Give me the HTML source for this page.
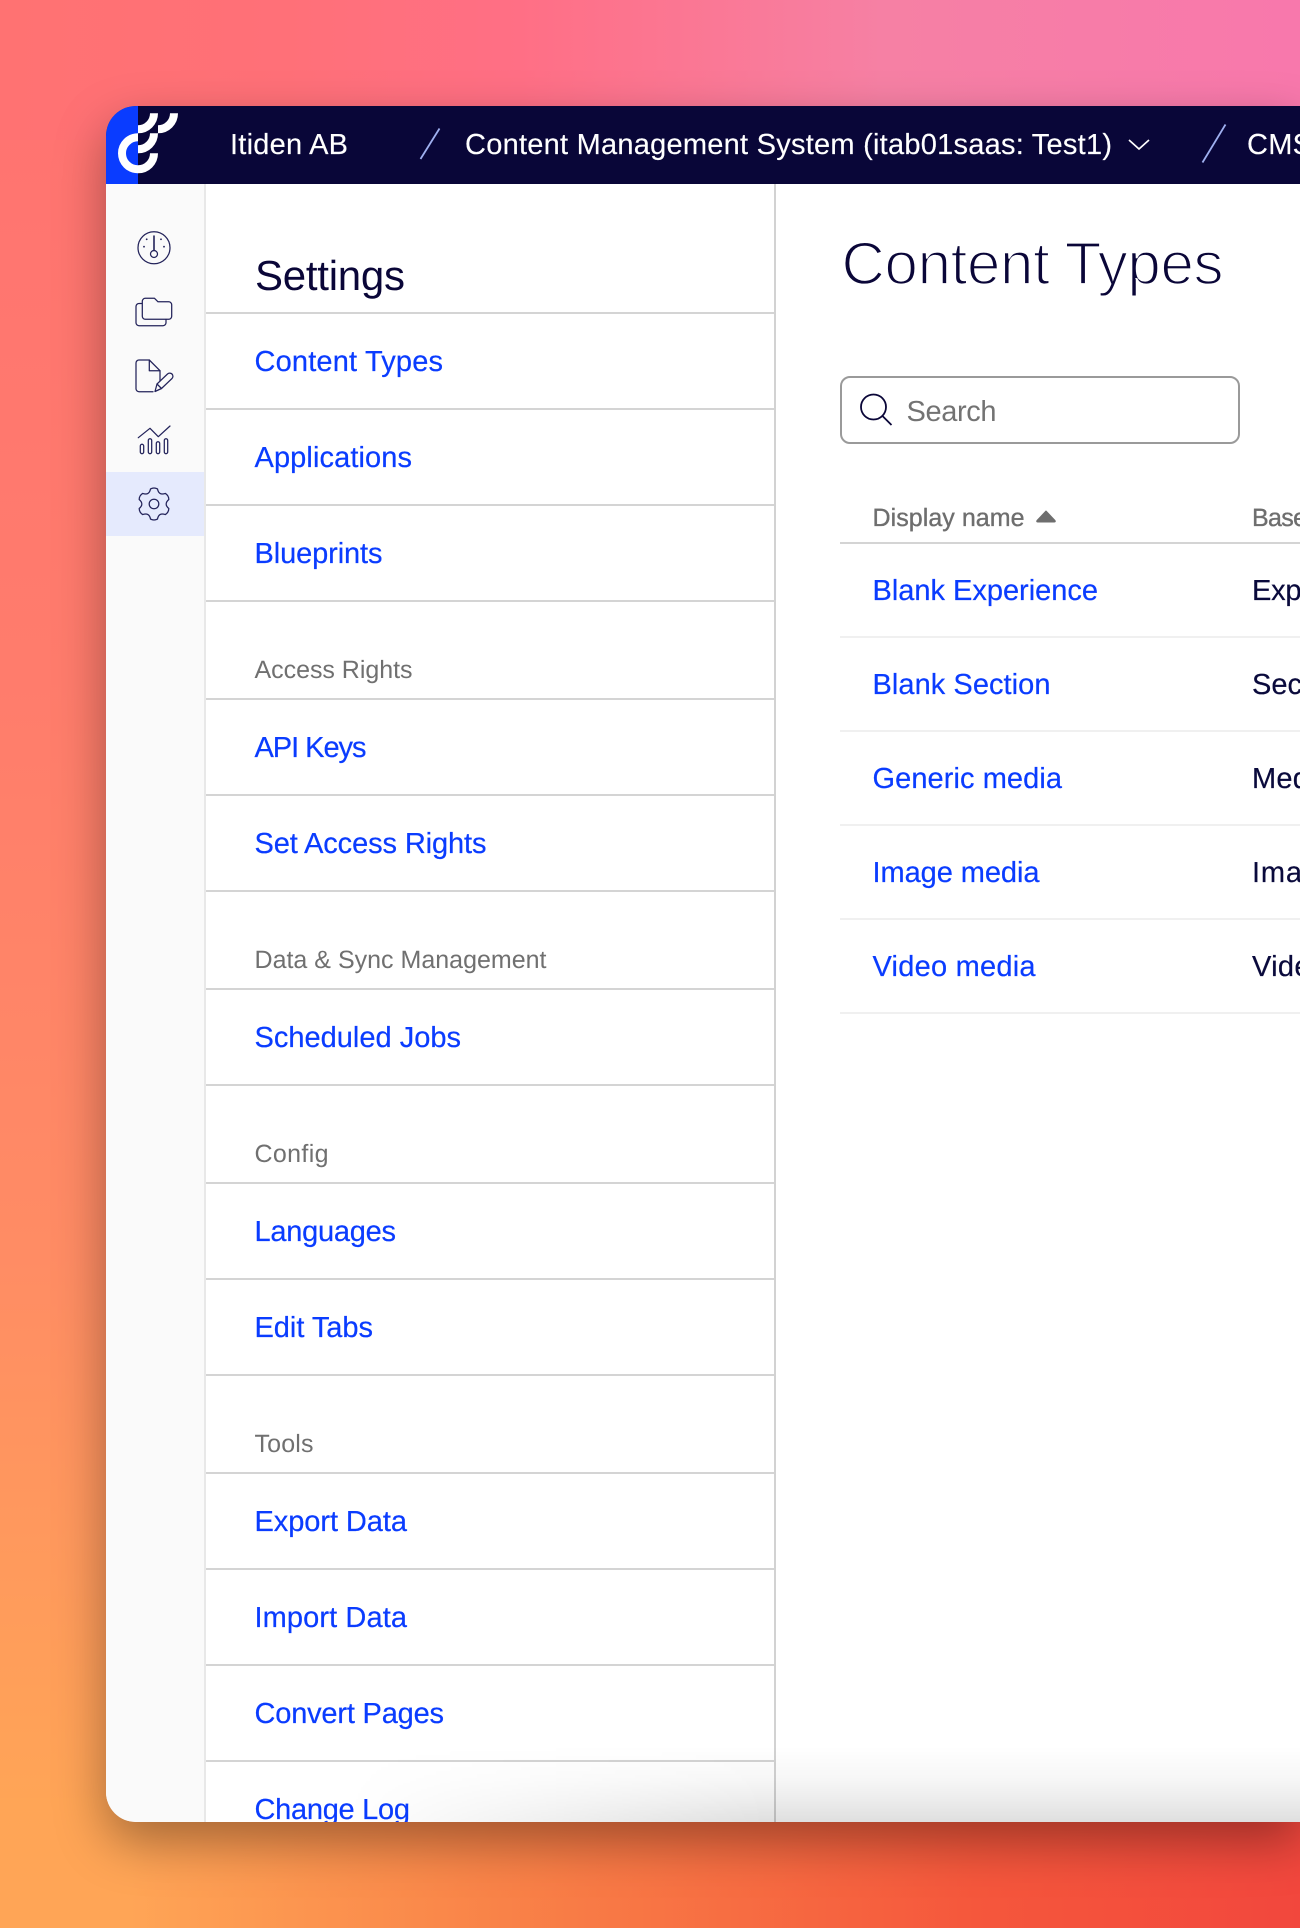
<!DOCTYPE html>
<html lang="en">
<head>
<meta charset="utf-8">
<title>Content Types</title>
<style>
html,body{margin:0;padding:0}
body{width:1300px;height:1928px;position:relative;overflow:hidden;
background:
 linear-gradient(90deg,#ff7272 0,#ff7078 22%,#ff6f85 40%,#f680a4 68%,#f878ac 100%) top/100% 140px no-repeat,
 linear-gradient(90deg,#ffa556 0,#ffa556 10%,#f98348 38%,#f5573c 75%,#f2473d 100%) bottom/100% 130px no-repeat,
 linear-gradient(180deg,#ff7272 0,#ff7c6c 35%,#ff8c64 65%,#ffa556 94%,#ffa556 100%);
font-family:"Liberation Sans",sans-serif}
#win{position:absolute;left:106px;top:106px;width:1194px;height:1716px;border-radius:30px 0 0 30px;background:#fff;box-shadow:0 20px 50px rgba(0,0,0,.35)}
#clip{position:absolute;inset:0;border-radius:30px 0 0 30px;overflow:hidden}
#clip svg{display:block;position:absolute;left:0;top:0}
#fade{position:absolute;left:0;right:0;bottom:0;height:76px;
background:linear-gradient(to top,rgba(0,0,0,.125) 0,rgba(0,0,0,.075) 22px,rgba(0,0,0,.035) 42px,rgba(0,0,0,0) 76px);
-webkit-mask-image:linear-gradient(90deg,transparent 240px,#000 660px);mask-image:linear-gradient(90deg,transparent 240px,#000 660px)}
text{font-family:"Liberation Sans",sans-serif;text-rendering:geometricPrecision}
.l{font-size:29px;fill:#0a3cff;stroke:#0a3cff;stroke-width:.2}
.s{font-size:25px;fill:#707070}
.d{font-size:29px;fill:#0a0a3c;stroke:#0a0a3c;stroke-width:.2}
.w{font-size:29px;fill:#fff;stroke:#fff;stroke-width:.15}
.i{fill:none;stroke:#23235a;stroke-width:1.25;stroke-linecap:round;stroke-linejoin:round}
</style>
</head>
<body>
<div id="win">
<div id="clip">
<svg width="1194" height="1716" viewBox="106 106 1194 1716" xmlns="http://www.w3.org/2000/svg">
  <!-- header -->
  <rect x="106" y="106" width="1194" height="78" fill="#090638"/>
  <rect x="106" y="106" width="32" height="78" fill="#0a3cff"/>
  <g fill="none" stroke="#fff" stroke-width="8">
    <path d="M138,137.3A16,16 0 1 0 154,153.3"/>
    <path d="M138,149.3A16,16 0 0 0 154,133.3"/>
    <path d="M138,129.3A16,16 0 0 0 154,113.3"/>
    <path d="M158,129.3A16,16 0 0 0 174,113.3"/>
  </g>
  <text class="w" x="230" y="154" textLength="118" lengthAdjust="spacing">Itiden AB</text>
  <path d="M420.5,159L439.5,128.5" stroke="#9fb0f0" stroke-width="1.8" fill="none"/>
  <text class="w" x="465" y="154" textLength="647" lengthAdjust="spacing">Content Management System (itab01saas: Test1)</text>
  <path d="M1129,140L1139,149L1149,140" fill="none" stroke="#fff" stroke-width="1.7"/>
  <path d="M1202.5,162.5L1225.5,124.5" stroke="#9fb0f0" stroke-width="1.8" fill="none"/>
  <text class="w" x="1247" y="154" textLength="65" lengthAdjust="spacing">CMS</text>

  <!-- sidebar -->
  <rect x="106" y="184" width="98" height="1640" fill="#fafafa"/>
  <rect x="204" y="184" width="2" height="1640" fill="#e8e8e8"/>
  <rect x="106" y="472" width="98" height="64" fill="#e5eafd"/>

  <!-- gauge -->
  <g class="i">
    <circle cx="154" cy="247.7" r="16"/>
    <path d="M154,236V250.5" stroke-width="1.6"/>
    <circle cx="154" cy="254" r="3.5"/>
  </g>
  <g fill="#23235a"><circle cx="146.7" cy="239.3" r=".9"/><circle cx="161" cy="239.3" r=".9"/><circle cx="144" cy="246.7" r=".9"/><circle cx="164" cy="246.7" r=".9"/></g>
  <!-- folders -->
  <g class="i">
    <path d="M142.3,316.3V301.3a3,3 0 0 1 3,-3H154.5l3.5,3.5H168.7a3,3 0 0 1 3,3V316.3a3,3 0 0 1 -3,3H145.3a3,3 0 0 1 -3,-3z"/>
    <path d="M141.7,303.5H139a3,3 0 0 0 -3,3V322.7a3,3 0 0 0 3,3H163a3,3 0 0 0 3,-3V319.5"/>
  </g>
  <!-- doc edit -->
  <g class="i">
    <path d="M160,381V370.7L149.3,360H139a3,3 0 0 0 -3,3V388.7a3,3 0 0 0 3,3H153"/>
    <path d="M149.3,360V370.7H160"/>
    <path d="M155,391.5L157,384L167.5,374a3,3 0 0 1 4.5,4.5L161.5,388.5Z"/>
    <path d="M157,384L161.5,388.5"/>
  </g>
  <!-- chart -->
  <g class="i">
    <path d="M138.3,437.7L150,428.3L158.3,436.7L170,426"/>
    <rect x="140.3" y="444.3" width="3.4" height="9.4" rx="1.7"/>
    <rect x="148.3" y="438.7" width="3.4" height="15" rx="1.7"/>
    <rect x="156.3" y="441.7" width="3.4" height="12" rx="1.7"/>
    <rect x="164.3" y="438.7" width="3.4" height="15" rx="1.7"/>
  </g>
  <!-- gear -->
  <g class="i" transform="translate(154,504)">
    <path d="M-3.49,-15.1Q0,-17 3.49,-15.1Q4.75,-8.23 11.33,-10.57Q14.72,-8.5 14.82,-4.53Q9.5,0 14.82,4.53Q14.72,8.5 11.33,10.57Q4.75,8.23 3.49,15.1Q0,17 -3.49,15.1Q-4.75,8.23 -11.33,10.57Q-14.72,8.5 -14.82,4.53Q-9.5,0 -14.82,-4.53Q-14.72,-8.5 -11.33,-10.57Q-4.75,-8.23 -3.49,-15.1Z"/>
    <circle r="4.8"/>
  </g>

  <!-- settings panel -->
  <rect x="774" y="184" width="2" height="1640" fill="#d2d2d2"/>
  <text x="255" y="290" font-size="42" fill="#0a0638" textLength="150" lengthAdjust="spacing">Settings</text>

  <g fill="#d4d4d4">
    <rect x="206" y="312" width="568" height="2"/>
    <rect x="206" y="408" width="568" height="2"/>
    <rect x="206" y="504" width="568" height="2"/>
    <rect x="206" y="600" width="568" height="2"/>
    <rect x="206" y="698" width="568" height="2"/>
    <rect x="206" y="794" width="568" height="2"/>
    <rect x="206" y="890" width="568" height="2"/>
    <rect x="206" y="988" width="568" height="2"/>
    <rect x="206" y="1084" width="568" height="2"/>
    <rect x="206" y="1182" width="568" height="2"/>
    <rect x="206" y="1278" width="568" height="2"/>
    <rect x="206" y="1374" width="568" height="2"/>
    <rect x="206" y="1472" width="568" height="2"/>
    <rect x="206" y="1568" width="568" height="2"/>
    <rect x="206" y="1664" width="568" height="2"/>
    <rect x="206" y="1760" width="568" height="2"/>
  </g>

  <text class="l" x="254.5" y="371" textLength="188.5" lengthAdjust="spacing">Content Types</text>
  <text class="l" x="254.5" y="467" textLength="157.5" lengthAdjust="spacing">Applications</text>
  <text class="l" x="254.5" y="563" textLength="128" lengthAdjust="spacing">Blueprints</text>
  <text class="s" x="254.5" y="678" textLength="158" lengthAdjust="spacing">Access Rights</text>
  <text class="l" x="254.5" y="757" textLength="112" lengthAdjust="spacing">API Keys</text>
  <text class="l" x="254.5" y="853" textLength="232" lengthAdjust="spacing">Set Access Rights</text>
  <text class="s" x="254.5" y="968" textLength="292" lengthAdjust="spacing">Data &amp; Sync Management</text>
  <text class="l" x="254.5" y="1047" textLength="206.5" lengthAdjust="spacing">Scheduled Jobs</text>
  <text class="s" x="254.5" y="1162" textLength="74" lengthAdjust="spacing">Config</text>
  <text class="l" x="254.5" y="1241" textLength="141.5" lengthAdjust="spacing">Languages</text>
  <text class="l" x="254.5" y="1337" textLength="118.5" lengthAdjust="spacing">Edit Tabs</text>
  <text class="s" x="254.5" y="1452" textLength="59" lengthAdjust="spacing">Tools</text>
  <text class="l" x="254.5" y="1531" textLength="152.5" lengthAdjust="spacing">Export Data</text>
  <text class="l" x="254.5" y="1627" textLength="152.5" lengthAdjust="spacing">Import Data</text>
  <text class="l" x="254.5" y="1723" textLength="189.5" lengthAdjust="spacing">Convert Pages</text>
  <text class="l" x="254.5" y="1819" textLength="155.5" lengthAdjust="spacing">Change Log</text>

  <!-- content -->
  <text x="841.5" y="284" font-size="60" fill="#0a0638" stroke="#fff" stroke-width="1.8" textLength="382" lengthAdjust="spacing">Content Types</text>

  <rect x="841" y="377" width="398" height="66" rx="9" fill="#fff" stroke="#9a9a9a" stroke-width="2"/>
  <circle cx="873.5" cy="407" r="12.5" fill="none" stroke="#0a0638" stroke-width="1.8"/>
  <path d="M882.5,416L891.5,425" stroke="#0a0638" stroke-width="1.8" fill="none"/>
  <text x="906.5" y="421" font-size="29" fill="#737373" textLength="90" lengthAdjust="spacing">Search</text>

  <text x="872.5" y="526" font-size="25" fill="#6e6e6e" stroke="#6e6e6e" stroke-width=".35" textLength="152" lengthAdjust="spacing">Display name</text>
  <path d="M1046,511L1055,520.5Q1056,522 1054,522H1038Q1036,522 1037,520.5Z" fill="#6e6e6e" stroke="#6e6e6e" stroke-linejoin="round"/>
  <text x="1252" y="526" font-size="25" fill="#6e6e6e" stroke="#6e6e6e" stroke-width=".35" textLength="55" lengthAdjust="spacing">Base</text>
  <rect x="840" y="542" width="460" height="2" fill="#d4d4d4"/>

  <g fill="#f0f0f0">
    <rect x="840" y="636" width="460" height="2"/>
    <rect x="840" y="730" width="460" height="2"/>
    <rect x="840" y="824" width="460" height="2"/>
    <rect x="840" y="918" width="460" height="2"/>
    <rect x="840" y="1012" width="460" height="2"/>
  </g>

  <text class="l" x="872.5" y="600" textLength="225.5" lengthAdjust="spacing">Blank Experience</text>
  <text class="d" x="1252" y="600" textLength="143" lengthAdjust="spacing">Experience</text>
  <text class="l" x="872.5" y="694" textLength="178" lengthAdjust="spacing">Blank Section</text>
  <text class="d" x="1252" y="694" textLength="97" lengthAdjust="spacing">Section</text>
  <text class="l" x="872.5" y="788" textLength="189.5" lengthAdjust="spacing">Generic media</text>
  <text class="d" x="1252" y="788" textLength="80" lengthAdjust="spacing">Media</text>
  <text class="l" x="872.5" y="882" textLength="167" lengthAdjust="spacing">Image media</text>
  <text class="d" x="1252" y="882" textLength="84" lengthAdjust="spacing">Image</text>
  <text class="l" x="872.5" y="976" textLength="163" lengthAdjust="spacing">Video media</text>
  <text class="d" x="1252" y="976" textLength="75" lengthAdjust="spacing">Video</text>
</svg>
<div id="fade"></div>
</div>
</div>
</body>
</html>
